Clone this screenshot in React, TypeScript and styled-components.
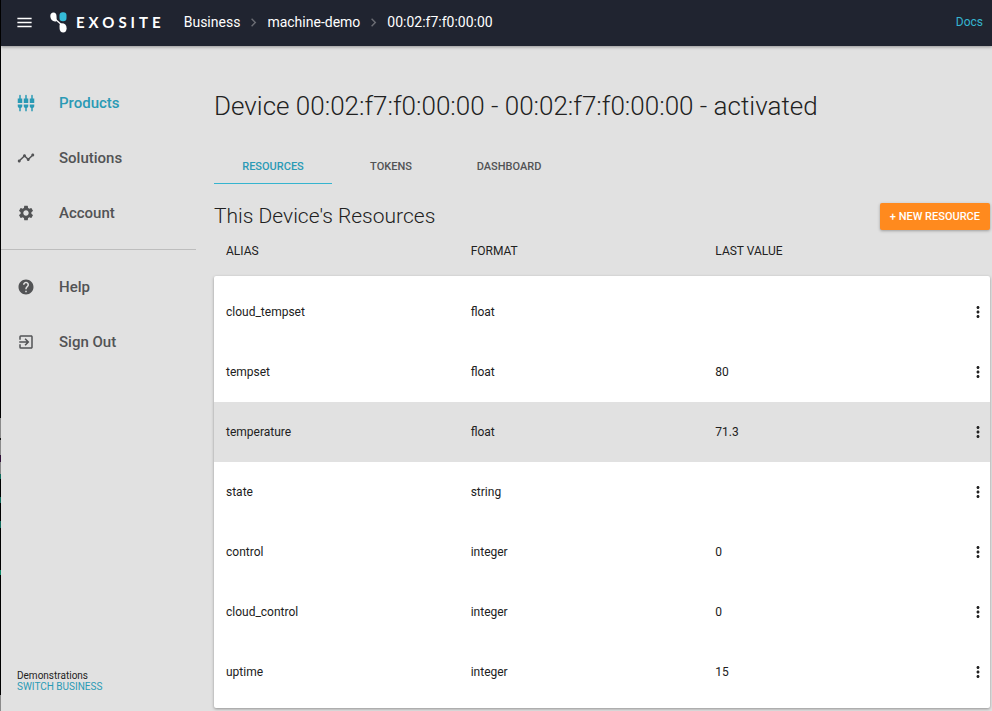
import React from 'react';
import styled, { createGlobalStyle } from 'styled-components';
import type { IconType } from 'react-icons';
import {
  MdChevronRight,
  MdExitToApp,
  MdHelp,
  MdMenu,
  MdMoreVert,
  MdSettings,
  MdSettingsInputComponent,
  MdTimeline,
} from 'react-icons/md';

const color = {
  bar: '#202430',
  page: '#e1e1e1',
  teal: '#2a9ab5',
  tealBright: '#35b4cf',
  text: '#212121',
  muted: '#525355',
  orange: '#ff8a1e',
};

const GlobalStyle = createGlobalStyle`
  *, *::before, *::after { box-sizing: border-box; }
  body {
    margin: 0;
    background: ${color.page};
    color: ${color.text};
    font-family: Roboto, "Liberation Sans", sans-serif;
    font-size: 12px;
  }
  button { font: inherit; border: 0; background: none; padding: 0; cursor: pointer; color: inherit; }
  a { text-decoration: none; color: inherit; }
  svg { display: block; }
`;

const Page = styled.div`
  display: flex;
  flex-direction: column;
  min-height: 100vh;
  padding-left: 1px;
  background:
    linear-gradient(#000 418px, #8a8a8a 418px 438px, #111 438px 440px, #8a8a8a 440px 455px,
      #301038 455px 462px, #8a8a8a 462px 474px, #0f6b5c 474px 479px, #000 479px 497px,
      #0f6b5c 497px 503px, #000 503px 521px, #0f6b5c 521px 528px, #000 528px 570px,
      #0f8a68 570px 575px, #000 575px 695px, #8a8a8a 695px) left top / 1px 100% no-repeat,
    ${color.page};
`;

const TopBar = styled.header`
  display: flex;
  align-items: center;
  height: 46px;
  padding: 0 9px 2px 14px;
  background: ${color.bar};
  color: #fff;
  box-shadow: 0 1px 3px rgba(0, 0, 0, 0.35);
`;

const MenuButton = styled.button`
  margin-right: 16px;
`;

const Brand = styled.a`
  display: flex;
  align-items: center;
  gap: 9px;
  margin-right: 19px;
`;

const BrandName = styled.span`
  font-family: Lato, "Liberation Sans", sans-serif;
  font-size: 15px;
  font-weight: 700;
  line-height: 18px;
  letter-spacing: 4px;
`;

const Crumbs = styled.nav`
  display: flex;
  flex: 1;
  align-items: center;
  gap: 5px;
  font-size: 14px;
  line-height: 18px;

  svg { color: #6b6d74; }
`;

const DocsLink = styled.a`
  color: ${color.tealBright};
  font-size: 12px;
`;

const Body = styled.div`
  display: flex;
  flex: 1;
`;

const Sidebar = styled.aside`
  display: flex;
  flex-direction: column;
  flex: 0 0 195px;
  padding-top: 29px;
`;

const NavList = styled.ul`
  margin: 0;
  padding: 0;
  list-style: none;

  & + & {
    margin-top: 9px;
    padding-top: 9px;
    border-top: 1px solid #bdbdbd;
  }
`;

const NavLink = styled.a<{ $active?: boolean }>`
  display: flex;
  align-items: center;
  gap: 24px;
  height: 55px;
  padding-left: 16px;
  font-size: 15px;
  font-weight: 500;
  color: ${(p) => (p.$active ? color.teal : color.muted)};
`;

const Account = styled.div`
  margin-top: auto;
  padding: 0 16px 19px;
  font-size: 10px;
  line-height: 11px;
`;

const AccountLine = styled.span`
  display: block;
`;

const SwitchLink = styled.a`
  display: block;
  color: ${color.teal};
`;

const Main = styled.main`
  flex: 1;
  min-width: 0;
  padding: 44px 2px 3px 18px;
`;

const Title = styled.h1`
  margin: 0;
  font-size: 26px;
  font-weight: 300;
  line-height: 32px;
`;

const Tabs = styled.div`
  display: flex;
  margin-top: 26px;
`;

const Tab = styled.button<{ $active?: boolean }>`
  width: 118px;
  height: 36px;
  padding-top: 2px;
  font-size: 11px;
  font-weight: 500;
  color: ${(p) => (p.$active ? color.teal : color.muted)};
  border-bottom: 1px solid ${(p) => (p.$active ? color.tealBright : 'transparent')};
`;

const SectionHead = styled.div`
  display: flex;
  align-items: flex-start;
  justify-content: space-between;
  margin-top: 19px;
`;

const SectionTitle = styled.h2`
  margin: 0;
  font-size: 21px;
  font-weight: 300;
  line-height: 26px;
`;

const NewButton = styled.button`
  height: 27px;
  padding: 0 10px;
  border-radius: 2px;
  background: ${color.orange};
  color: #fff;
  font-size: 11px;
  font-weight: 500;
  box-shadow: 0 1px 3px rgba(0, 0, 0, 0.3);
`;

const Table = styled.table`
  display: block;
`;

const TableHead = styled.thead`
  display: block;
  padding: 8px 0 12px;
`;

const TableBody = styled.tbody`
  display: block;
  padding: 6px 0;
  background: #fff;
  border-radius: 2px;
  box-shadow: 0 1px 3px rgba(0, 0, 0, 0.35);
`;

const Row = styled.tr<{ $height: number; $highlight?: boolean }>`
  display: grid;
  grid-template-columns: repeat(3, 1fr) 30px;
  align-items: center;
  height: ${(p) => p.$height}px;
  padding-left: 12px;
  background: ${(p) => (p.$highlight ? color.page : 'transparent')};
`;

const HeadCell = styled.th`
  padding: 0;
  text-align: left;
  font-weight: 400;
`;

const Cell = styled.td`
  padding: 0;
`;

const MoreButton = styled.button`
  display: block;
  padding: 0 3px 0 9px;
`;

const BrandMark = () => (
  <svg width="17" height="21" viewBox="0 0 17 21" aria-hidden="true">
    <path d="M5 7 L12.5 13.5" stroke="#fff" strokeWidth="1.3" />
    <path
      d="M.3 4.2C.3 1.7 1.6.5 3.5.5s3 1.2 3 3.500l.2 4.100c0 1.100-.7 1.600-1.800 1.500C2.500 9.300.300 7.300.300 4.200Z"
      fill="#fff"
    />
    <rect x="9.500" y="0.300" width="7" height="9" rx="3.200" fill="#35bcd9" />
    <path
      d="M9.500 14c0-2 .7-2.700 2.300-2.700 3 0 4.800 1.800 4.800 4.900 0 2.800-1.300 4.300-3.400 4.300s-3.500-1.500-3.600-3.700Z"
      fill="#fff"
    />
  </svg>
);

interface NavItem {
  label: string;
  icon: IconType;
}

const mainNav: NavItem[] = [
  { label: 'Products', icon: MdSettingsInputComponent },
  { label: 'Solutions', icon: MdTimeline },
  { label: 'Account', icon: MdSettings },
];

const extraNav: NavItem[] = [
  { label: 'Help', icon: MdHelp },
  { label: 'Sign Out', icon: MdExitToApp },
];

const crumbs = ['Business', 'machine-demo', '00:02:f7:f0:00:00'];
const tabs = ['RESOURCES', 'TOKENS', 'DASHBOARD'];

const resources = [
  { alias: 'cloud_tempset', format: 'float', value: '' },
  { alias: 'tempset', format: 'float', value: '80' },
  { alias: 'temperature', format: 'float', value: '71.3' },
  { alias: 'state', format: 'string', value: '' },
  { alias: 'control', format: 'integer', value: '0' },
  { alias: 'cloud_control', format: 'integer', value: '0' },
  { alias: 'uptime', format: 'integer', value: '15' },
];

const NavItems = ({ items, active }: { items: NavItem[]; active?: string }) => (
  <NavList>
    {items.map(({ label, icon: Icon }) => (
      <li key={label}>
        <NavLink href="#" $active={label === active}>
          <Icon size={18} />
          {label}
        </NavLink>
      </li>
    ))}
  </NavList>
);

export default function App() {
  return (
    <>
      <GlobalStyle />
      <Page>
        <TopBar>
          <MenuButton aria-label="Menu">
            <MdMenu size={19} />
          </MenuButton>
          <Brand href="#">
            <BrandMark />
            <BrandName>EXOSITE</BrandName>
          </Brand>
          <Crumbs aria-label="Breadcrumb">
            {crumbs.map((crumb, i) => (
              <React.Fragment key={crumb}>
                {i > 0 && <MdChevronRight size={17} />}
                <a href="#">{crumb}</a>
              </React.Fragment>
            ))}
          </Crumbs>
          <DocsLink href="#">Docs</DocsLink>
        </TopBar>
        <Body>
          <Sidebar>
            <nav>
              <NavItems items={mainNav} active="Products" />
              <NavItems items={extraNav} />
            </nav>
            <Account>
              <AccountLine>Demonstrations</AccountLine>
              <SwitchLink href="#">SWITCH BUSINESS</SwitchLink>
            </Account>
          </Sidebar>
          <Main>
            <Title>Device 00:02:f7:f0:00:00 - 00:02:f7:f0:00:00 - activated</Title>
            <Tabs role="tablist">
              {tabs.map((tab, i) => (
                <Tab key={tab} role="tab" aria-selected={i === 0} $active={i === 0}>
                  {tab}
                </Tab>
              ))}
            </Tabs>
            <SectionHead>
              <SectionTitle>This Device's Resources</SectionTitle>
              <NewButton>+ NEW RESOURCE</NewButton>
            </SectionHead>
            <Table>
              <TableHead>
                <Row $height={26}>
                  <HeadCell scope="col">ALIAS</HeadCell>
                  <HeadCell scope="col">FORMAT</HeadCell>
                  <HeadCell scope="col">LAST VALUE</HeadCell>
                </Row>
              </TableHead>
              <TableBody>
                {resources.map(({ alias, format, value }) => (
                  <Row key={alias} $height={60} $highlight={alias === 'temperature'}>
                    <Cell>{alias}</Cell>
                    <Cell>{format}</Cell>
                    <Cell>{value}</Cell>
                    <Cell>
                      <MoreButton aria-label={`Actions for ${alias}`}>
                        <MdMoreVert size={18} />
                      </MoreButton>
                    </Cell>
                  </Row>
                ))}
              </TableBody>
            </Table>
          </Main>
        </Body>
      </Page>
    </>
  );
}
